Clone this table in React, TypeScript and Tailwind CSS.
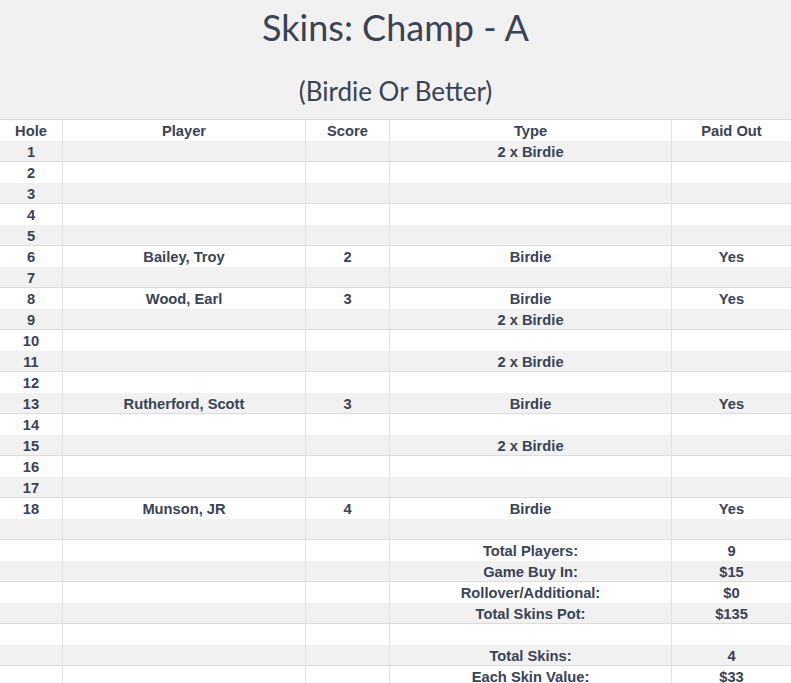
import React from 'react';

type Row = { hole?: string; player?: string; score?: string; type?: string; paid?: string };

const HOLES: Row[] = [
  { hole: '1', type: '2 x Birdie' },
  { hole: '2' },
  { hole: '3' },
  { hole: '4' },
  { hole: '5' },
  { hole: '6', player: 'Bailey, Troy', score: '2', type: 'Birdie', paid: 'Yes' },
  { hole: '7' },
  { hole: '8', player: 'Wood, Earl', score: '3', type: 'Birdie', paid: 'Yes' },
  { hole: '9', type: '2 x Birdie' },
  { hole: '10' },
  { hole: '11', type: '2 x Birdie' },
  { hole: '12' },
  { hole: '13', player: 'Rutherford, Scott', score: '3', type: 'Birdie', paid: 'Yes' },
  { hole: '14' },
  { hole: '15', type: '2 x Birdie' },
  { hole: '16' },
  { hole: '17' },
  { hole: '18', player: 'Munson, JR', score: '4', type: 'Birdie', paid: 'Yes' },
  {},
  { type: 'Total Players:', paid: '9' },
  { type: 'Game Buy In:', paid: '$15' },
  { type: 'Rollover/Additional:', paid: '$0' },
  { type: 'Total Skins Pot:', paid: '$135' },
  {},
  { type: 'Total Skins:', paid: '4' },
  { type: 'Each Skin Value:', paid: '$33' },
];

const cell = 'flex items-center justify-center border-r border-[#e2e2e2] whitespace-nowrap';

const TableRow: React.FC<{ row: Row; shaded: boolean }> = ({ row, shaded }) => (
  <div
    className={`grid grid-cols-[63px_243px_84px_282px_1fr] h-[21px] ${
      shaded ? 'bg-[#f1f1f1] border-b border-[#dcdcdc]' : 'bg-white'
    }`}
  >
    <div className={cell}>{row.hole}</div>
    <div className={cell}>{row.player}</div>
    <div className={cell}>{row.score}</div>
    <div className={cell}>{row.type}</div>
    <div className="flex items-center justify-center">{row.paid}</div>
  </div>
);

export default function App() {
  return (
    <div className="min-h-screen w-[791px] bg-[#f1f1f1] text-[#394256]">
      <div className="flex flex-col items-center pt-[5px] pb-[13px] font-['Lato',sans-serif]">
        <h1 className="text-[36px] leading-[44px] font-normal">Skins: Champ - A</h1>
        <h2 className="mt-[27px] text-[26px] leading-[30px] font-normal">(Birdie Or Better)</h2>
      </div>
      <div className="border-t border-[#dcdcdc] font-['Liberation_Sans',Arial,sans-serif] text-[14.7px] font-bold">
        <TableRow row={{ hole: 'Hole', player: 'Player', score: 'Score', type: 'Type', paid: 'Paid Out' }} shaded={false} />
        {HOLES.map((r, i) => (
          <TableRow key={i} row={r} shaded={i % 2 === 0} />
        ))}
      </div>
    </div>
  );
}
